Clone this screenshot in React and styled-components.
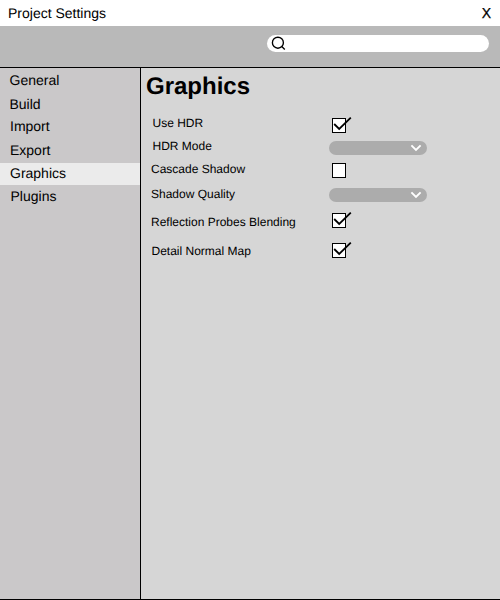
import React from "react";
import styled, { createGlobalStyle } from "styled-components";

const GlobalStyle = createGlobalStyle`
  * { box-sizing: border-box; }
  body {
    margin: 0;
    font-family: "Liberation Sans", Arial, sans-serif;
    color: #000;
    text-rendering: geometricPrecision;
  }
`;

const Window = styled.div`
  display: flex;
  flex-direction: column;
  width: 500px;
  height: 600px;
  overflow: hidden;
  border-bottom: 1px solid #000;
  background: #d6d6d6;
`;

const TitleBar = styled.header`
  display: flex;
  justify-content: space-between;
  height: 26px;
  padding: 0 9px 0 8px;
  background: #fff;
  font-size: 14px;
  line-height: 26px;
`;

const CloseButton = styled.button`
  padding: 0;
  border: 0;
  background: none;
  color: inherit;
  font: inherit;
  -webkit-text-stroke: 0.25px #000;
`;

const Toolbar = styled.div`
  display: flex;
  justify-content: flex-end;
  height: 42px;
  padding: 9px 11px 0 0;
  border-bottom: 1px solid #000;
  background: #b9b9b9;
`;

const SearchBox = styled.label`
  display: flex;
  align-items: center;
  width: 222px;
  height: 17px;
  padding-left: 4px;
  border-radius: 9px;
  background: #fff;
`;

const Body = styled.div`
  display: flex;
  flex: 1;
`;

const Sidebar = styled.nav`
  width: 141px;
  padding-top: 1px;
  border-right: 1px solid #000;
  background: #cac8c9;
`;

const NavItem = styled.div`
  height: 22px;
  margin-top: ${(p) => p.$gap}px;
  padding-left: ${(p) => p.$indent}px;
  background: ${(p) => (p.$active ? "#ebebeb" : "transparent")};
  font-size: 14px;
  line-height: 21px;
`;

const Content = styled.main`
  flex: 1;
  padding: 5px 0 0 5px;
`;

const Heading = styled.h1`
  margin: 0;
  height: 45px;
  font-size: 24px;
  line-height: 28px;
`;

const Setting = styled.div`
  display: flex;
  align-items: flex-start;
  height: ${(p) => p.$height}px;
`;

const Label = styled.span`
  width: 183px;
  margin-top: ${(p) => p.$top}px;
  padding-left: ${(p) => p.$indent}px;
  font-size: 12px;
  line-height: 14px;
  white-space: nowrap;
`;

const CheckBox = styled.span`
  width: 14px;
  height: 15px;
  margin-left: 3px;
  border: 1px solid #000;
  background: #fff;

  svg { display: block; margin: -2px 0 0 -1px; overflow: visible; }
`;

const Select = styled.span`
  display: flex;
  align-items: center;
  justify-content: flex-end;
  width: 98px;
  height: 14px;
  padding-right: 5px;
  border-radius: 7px;
  background: #acacac;
`;

const SearchIcon = () => (
  <svg width="15" height="15" viewBox="0 0 15 15" fill="none" stroke="#000" strokeWidth="1.35">
    <circle cx="6.9" cy="6.7" r="5.5" />
    <path d="M10.8 10.5L13.8 13.5" />
  </svg>
);

const CheckMark = () => (
  <svg width="20" height="15" viewBox="0 0 20 15" fill="none" stroke="#000" strokeWidth="1.8">
    <path d="M2.2 7L7.2 12L18.8 0.6" />
  </svg>
);

const Chevron = () => (
  <svg width="12" height="8" viewBox="0 0 12 8" fill="none" stroke="#fff" strokeWidth="1.9">
    <path d="M1.4 1.4L6 6L10.6 1.4" />
  </svg>
);

const pages = [
  { name: "General", gap: 1, indent: 9.5 },
  { name: "Build", gap: 2, indent: 9.5 },
  { name: "Import", gap: 0, indent: 10 },
  { name: "Export", gap: 2, indent: 10 },
  { name: "Graphics", gap: 1, indent: 10 },
  { name: "Plugins", gap: 1, indent: 10.5 },
];

const settings = [
  { name: "Use HDR", kind: "check", on: true, height: 23, top: -2, indent: 6.5 },
  { name: "HDR Mode", kind: "select", height: 22, top: -2, indent: 6.5 },
  { name: "Cascade Shadow", kind: "check", height: 25, top: -1, indent: 5 },
  { name: "Shadow Quality", kind: "select", height: 25, top: -1, indent: 5 },
  { name: "Reflection Probes Blending", kind: "check", on: true, height: 30, top: 2, indent: 5 },
  { name: "Detail Normal Map", kind: "check", on: true, height: 30, top: 1, indent: 5.5 },
];

export default function App() {
  return (
    <>
      <GlobalStyle />
      <Window>
        <TitleBar>
          <span>Project Settings</span>
          <CloseButton>X</CloseButton>
        </TitleBar>
        <Toolbar>
          <SearchBox><SearchIcon /></SearchBox>
        </Toolbar>
        <Body>
          <Sidebar>
            {pages.map((p) => (
              <NavItem key={p.name} $gap={p.gap} $indent={p.indent} $active={p.name === "Graphics"}>
                {p.name}
              </NavItem>
            ))}
          </Sidebar>
          <Content>
            <Heading>Graphics</Heading>
            {settings.map((s) => (
              <Setting key={s.name} $height={s.height}>
                <Label $top={s.top} $indent={s.indent}>{s.name}</Label>
                {s.kind === "check" ? (
                  <CheckBox>{s.on && <CheckMark />}</CheckBox>
                ) : (
                  <Select><Chevron /></Select>
                )}
              </Setting>
            ))}
          </Content>
        </Body>
      </Window>
    </>
  );
}
